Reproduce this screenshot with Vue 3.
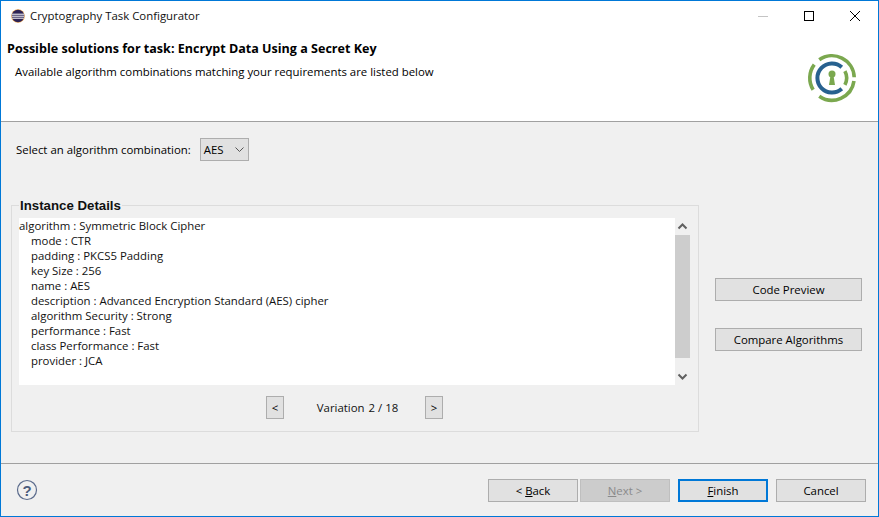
<script setup>
const arc = (r, a0, a1) => {
  const p = (a) => {
    const t = (a * Math.PI) / 180
    return `${(32 + r * Math.cos(t)).toFixed(2)} ${(32 - r * Math.sin(t)).toFixed(2)}`
  }
  const large = a0 - a1 > 180 ? 1 : 0
  return `M${p(a0)}A${r} ${r} 0 ${large} 1 ${p(a1)}`
}
const rows = [
  'mode : CTR',
  'padding : PKCS5 Padding',
  'key Size : 256',
  'name : AES',
  'description : Advanced Encryption Standard (AES) cipher',
  'algorithm Security : Strong',
  'performance : Fast',
  'class Performance : Fast',
  'provider : JCA',
]
</script>

<template>
  <div class="window">
    <div class="titlebar">
      <svg class="app-icon" width="14" height="14" viewBox="0 0 14 14">
        <circle cx="7" cy="7" r="6.8" fill="#e8a04a" />
        <circle cx="7" cy="7" r="6.2" fill="#2c2255" />
        <path d="M1 5.2h12M.8 7.2h12.4M1.2 9.2h11.6" stroke="#fff" stroke-width="1" />
      </svg>
      <span class="title-text">Cryptography Task Configurator</span>
      <div class="controls">
        <span class="ctl"><svg width="12" height="12" viewBox="0 0 12 12"><path d="M1 6.5h10" stroke="#c4c4c4" /></svg></span>
        <span class="ctl"><svg width="12" height="12" viewBox="0 0 12 12"><rect x="1.5" y="1.5" width="9" height="9" fill="none" stroke="#000" /></svg></span>
        <span class="ctl"><svg width="12" height="12" viewBox="0 0 12 12"><path d="M1 1l10 10M11 1L1 11" stroke="#000" /></svg></span>
      </div>
    </div>

    <header class="banner">
      <div class="banner-text">
        <h1>Possible solutions for task: Encrypt Data Using a Secret Key</h1>
        <p>Available algorithm combinations matching your requirements are listed below</p>
      </div>
      <svg class="logo" width="64" height="64" viewBox="0 0 64 64" fill="none">
        <g stroke="#7ba84f" stroke-width="3.6">
          <path :d="arc(22.2, 125, 2)" />
          <path :d="arc(22.2, -8, -125)" />
          <path :d="arc(22.2, 212, 143)" />
          <path :d="arc(14.6, 28, -28)" />
        </g>
        <path :d="arc(14.6, 48, -48).replace(/ 0 0 1 /, ' 0 1 0 ')" stroke="#27618f" stroke-width="4" />
        <circle cx="32" cy="28" r="3.5" fill="#7ba84f" />
        <path d="M30.6 29h2.8l1.6 10h-6z" fill="#7ba84f" />
      </svg>
    </header>

    <main class="body">
      <div class="picker">
        <label>Select an algorithm combination:</label>
        <div class="select">
          <span>AES</span>
          <svg width="9" height="6" viewBox="0 0 9 6"><path d="M.5.5L4.5 4.5 8.5.5" fill="none" stroke="#555" /></svg>
        </div>
      </div>

      <div class="content">
        <section class="group">
          <h2>Instance Details</h2>
          <div class="details">
            <div class="text">
              <div>algorithm : Symmetric Block Cipher</div>
              <div v-for="row in rows" :key="row" class="child">{{ row }}</div>
            </div>
            <div class="scrollbar">
              <svg width="15" height="17" viewBox="0 0 15 17"><path d="M3.5 10.5l4-4 4 4" fill="none" stroke="#606060" stroke-width="2" /></svg>
              <div class="thumb"></div>
              <svg width="15" height="27" viewBox="0 0 15 27"><path d="M3.5 16.5l4 4 4-4" fill="none" stroke="#606060" stroke-width="2" /></svg>
            </div>
          </div>
          <div class="pager">
            <button class="btn small">&lt;</button>
            <div class="variation"><span>Variation</span><span>2 / 18</span></div>
            <button class="btn small">&gt;</button>
          </div>
        </section>

        <aside class="side">
          <button class="btn wide">Code Preview</button>
          <button class="btn wide">Compare Algorithms</button>
        </aside>
      </div>
    </main>

    <footer class="footer">
      <svg class="help" width="22" height="22" viewBox="0 0 22 22">
        <circle cx="11" cy="11" r="9.5" fill="none" stroke="#5b6b8c" stroke-width="1.2" />
        <text x="11" y="16.5" text-anchor="middle" class="help-q">?</text>
      </svg>
      <div class="nav">
        <button class="btn nav-btn">&lt; <u>B</u>ack</button>
        <button class="btn nav-btn disabled"><u>N</u>ext &gt;</button>
        <button class="btn nav-btn primary"><u>F</u>inish</button>
        <button class="btn nav-btn">Cancel</button>
      </div>
    </footer>
  </div>
</template>

<style>
html, body { margin: 0; padding: 0; }
</style>

<style scoped>
.window {
  width: 879px;
  height: 517px;
  box-sizing: border-box;
  border: 1px solid #0078d7;
  background: #f0f0f0;
  display: flex;
  flex-direction: column;
  overflow: hidden;
  font-family: "Open Sans", "Noto Sans", sans-serif;
  font-size: 11.4px;
  color: #000;
}
.titlebar {
  height: 29px;
  background: #fff;
  display: flex;
  align-items: center;
  padding-left: 10px;
  flex: none;
}
.app-icon { margin-right: 5px; }
.title-text { flex: 1; color: #111; }
.controls { display: flex; }
.ctl {
  width: 46px;
  height: 29px;
  display: flex;
  align-items: center;
  justify-content: center;
}
.banner {
  height: 91px;
  background: #fff;
  border-bottom: 1px solid #a0a0a0;
  display: flex;
  justify-content: space-between;
  flex: none;
}
.banner-text { padding: 10px 0 0 6px; }
.banner h1 {
  margin: 0;
  font-size: 12.55px;
  line-height: 18px;
  font-weight: 700;
}
.banner p {
  margin: 5px 0 0 8px;
  line-height: 18px;
}
.logo { margin: 15.5px 14px 0 0; }
.body { flex: 1; display: flex; flex-direction: column; min-height: 0; }
.picker {
  display: flex;
  align-items: center;
  gap: 9px;
  padding: 16px 0 0 15px;
}
.select {
  width: 49px;
  height: 23px;
  box-sizing: border-box;
  border: 1px solid #adadad;
  background: #e1e1e1;
  display: flex;
  align-items: center;
  justify-content: space-between;
  padding: 0 4px 0 3px;
}
.content {
  display: flex;
  margin-top: 44px;
  padding-left: 10px;
}
.group {
  width: 688px;
  height: 227px;
  box-sizing: border-box;
  border: 1px solid #dcdcdc;
  padding: 0 8px 0 7px;
}
.group h2 {
  margin: -9px 0 0 0;
  padding: 0 1px;
  width: max-content;
  background: #f0f0f0;
  font-family: "Liberation Sans", Arial, sans-serif;
  font-size: 13.25px;
  line-height: 17px;
  font-weight: 700;
  color: #111;
}
.details {
  display: flex;
  margin-top: 4px;
  height: 167px;
}
.text {
  width: 656px;
  background: #fff;
  line-height: 15px;
  color: #111;
}
.child { padding-left: 12px; }
.scrollbar {
  width: 15px;
  display: flex;
  flex-direction: column;
}
.thumb { flex: 1; background: #cdcdcd; }
.pager {
  display: flex;
  align-items: center;
  margin-top: 11px;
  padding-left: 247px;
}
.variation {
  width: 141px;
  box-sizing: border-box;
  padding-left: 6px;
  display: flex;
  justify-content: center;
  gap: 4px;
  color: #111;
}
.btn {
  box-sizing: border-box;
  border: 1px solid #adadad;
  background: #e1e1e1;
  font: inherit;
  color: #000;
  padding: 0;
  height: 23px;
  text-align: center;
}
.small { width: 18px; }
.side {
  display: flex;
  flex-direction: column;
  gap: 27px;
  margin: 73px 0 0 16px;
}
.wide { width: 147px; }
.footer {
  height: 53px;
  flex: none;
  border-top: 1px solid #a0a0a0;
  display: flex;
  justify-content: space-between;
  padding: 15px 12px 0 15px;
  box-sizing: border-box;
}
.help-q {
  font-family: "Liberation Sans", sans-serif;
  font-size: 15px;
  font-weight: 700;
  fill: #4c5c7c;
}
.nav { display: flex; gap: 2px; }
.nav-btn { width: 90px; }
.disabled { background: #cccccc; border-color: #bfbfbf; color: #8a8a8a; }
.primary { border: 2px solid #0078d7; margin: 0 6px; }
</style>
